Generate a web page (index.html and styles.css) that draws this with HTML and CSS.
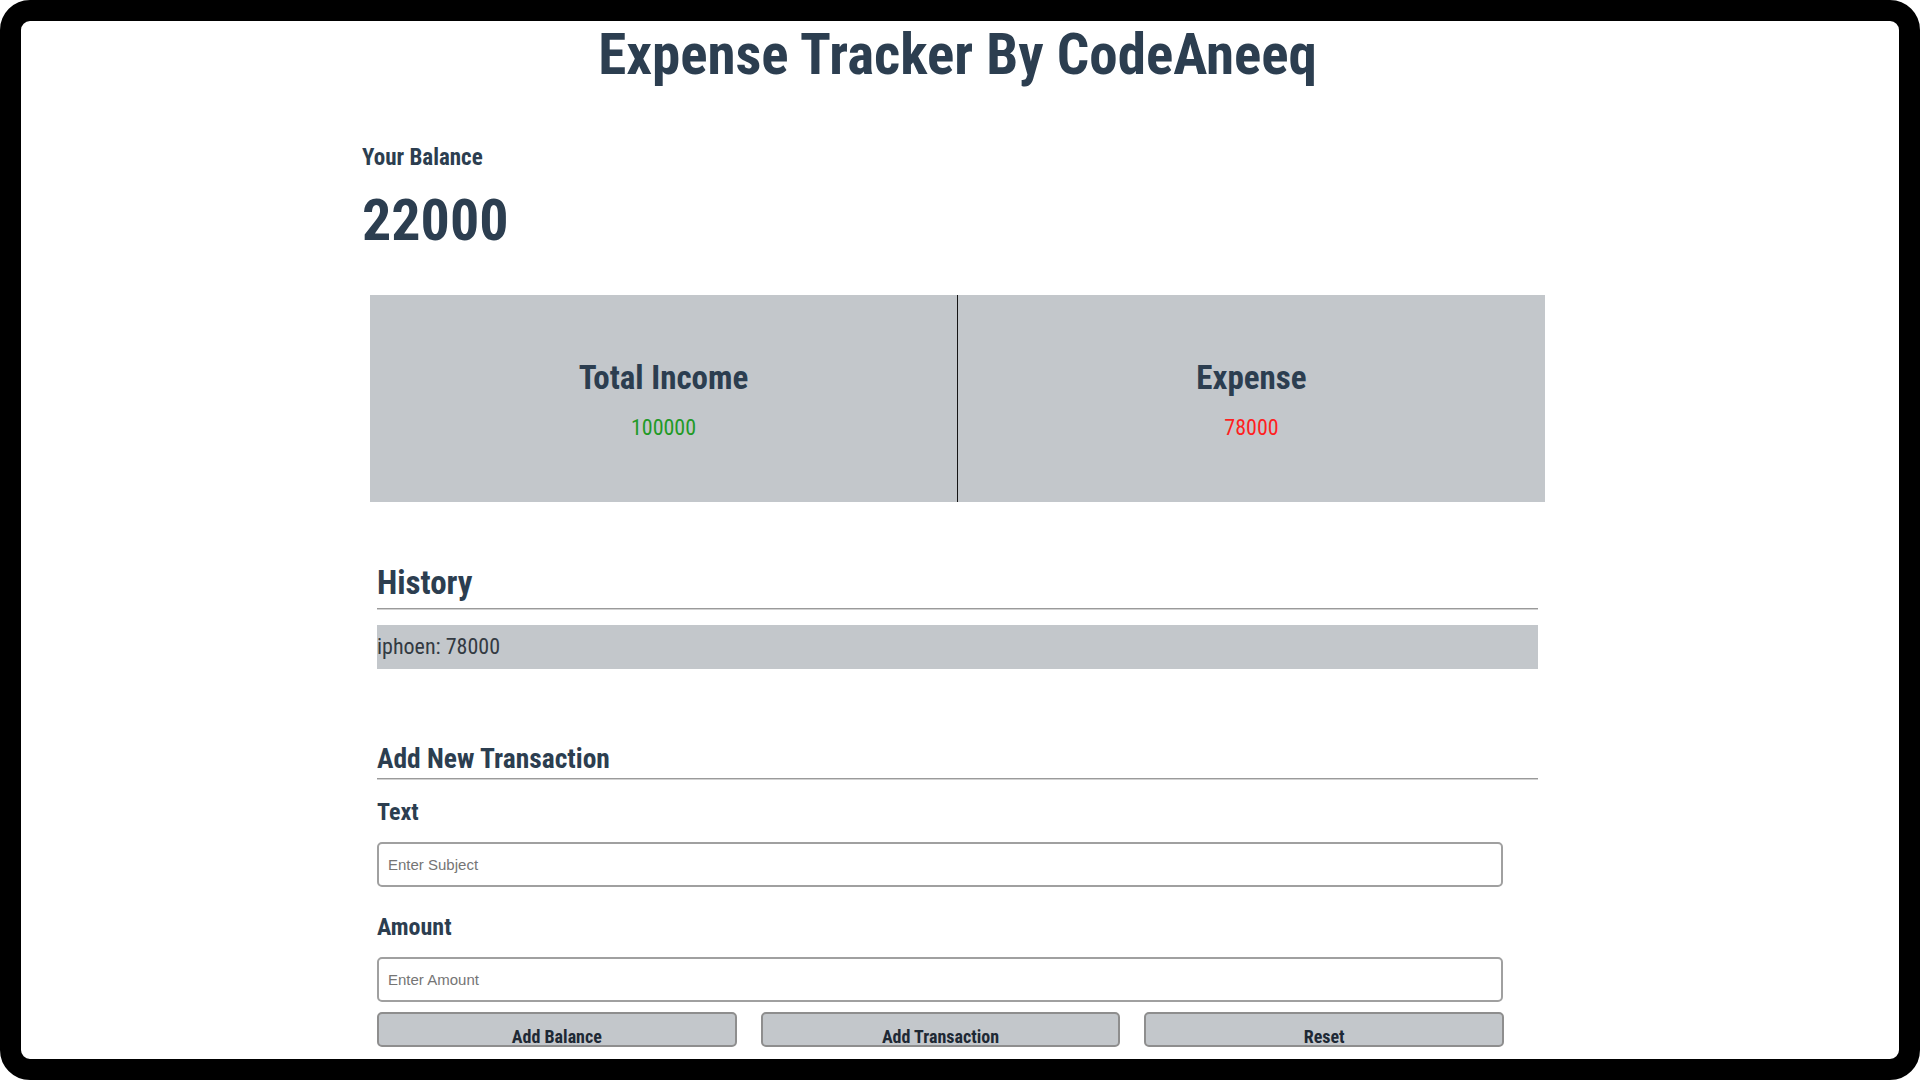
FILE: index.html
```html
<!DOCTYPE html>
<html lang="en">
<head>
<meta charset="utf-8">
<title>Expense Tracker By CodeAneeq</title>
<link rel="stylesheet" href="styles.css">
</head>
<body>
<div class="frame">
  <h1 class="title">Expense Tracker By CodeAneeq</h1>
  <div class="app">
    <h4 class="balance-label">Your Balance</h4>
    <h1 class="balance">22000</h1>

    <div class="stats">
      <div class="stat">
        <h3 class="stat-title">Total Income</h3>
        <p class="money plus">100000</p>
      </div>
      <div class="stat">
        <h3 class="stat-title">Expense</h3>
        <p class="money minus">78000</p>
      </div>
    </div>

    <div class="section">
      <h3 class="section-title">History</h3>
      <hr class="rule">
      <ul class="list">
        <li class="item">iphoen: 78000</li>
      </ul>

      <h3 class="section-title small">Add New Transaction</h3>
      <hr class="rule tight">

      <form class="form">
        <label class="field-label first" for="text">Text</label>
        <input class="field" type="text" id="text" placeholder="Enter Subject">
        <label class="field-label" for="amount">Amount</label>
        <input class="field" type="number" id="amount" placeholder="Enter Amount">
        <div class="buttons">
          <button type="button" class="btn">Add Balance</button>
          <button type="button" class="btn">Add Transaction</button>
          <button type="button" class="btn">Reset</button>
        </div>
      </form>
    </div>
  </div>
</div>
</body>
</html>
```
FILE: styles.css
```css
* {
  box-sizing: border-box;
}

html,
body {
  margin: 0;
  padding: 0;
  background: #ffffff;
}

body {
  font-family: "Roboto Condensed", Roboto, "Liberation Sans", sans-serif;
  color: #2c3e50;
}

.frame {
  width: 1920px;
  height: 1080px;
  border: 21px solid #000000;
  border-radius: 30px;
  overflow: hidden;
  background: #ffffff;
}

.title {
  margin: 0;
  padding-right: 5px;
  text-align: center;
  font-size: 57px;
  line-height: 68px;
  font-weight: 700;
}

.app {
  margin-left: 341px;
  width: 1183px;
}

.balance-label {
  margin: 56px 0 0;
  font-size: 23px;
  line-height: 26px;
  font-weight: 700;
}

.balance {
  margin: 16px 0 0;
  font-size: 58px;
  line-height: 66px;
  font-weight: 700;
}

.stats {
  margin: 42px 0 0 8px;
  width: 1175px;
  height: 207px;
  display: flex;
  background: #c3c7cb;
}

.stat {
  flex: 1 1 0;
  display: flex;
  flex-direction: column;
  align-items: center;
  padding-top: 63px;
}

.stat + .stat {
  border-left: 1px solid #151515;
}

.stat-title {
  margin: 0;
  font-size: 33px;
  line-height: 39px;
  font-weight: 700;
}

.money {
  margin: 18px 0 0;
  font-size: 22px;
  line-height: 26px;
}

.plus {
  color: #1f9a26;
}

.minus {
  color: #ff1f1f;
}

.section {
  margin: 0 7px 0 15px;
}

.section-title {
  margin: 61px 0 0;
  font-size: 33px;
  line-height: 39px;
  font-weight: 700;
}

.section-title.small {
  margin-top: 73px;
  font-size: 27.5px;
  line-height: 33px;
}

.rule {
  margin: 6px 0 0;
  height: 0;
  border: 0;
  border-top: 1px solid #9a9a9a;
  border-bottom: 1px solid #d2d2d2;
}

.rule.tight {
  margin-top: 3px;
}

.list {
  list-style: none;
  margin: 15px 0 0;
  padding: 0;
}

.item {
  height: 44px;
  line-height: 44px;
  font-size: 22px;
  color: #333a42;
  background: #c3c7cb;
}

.form {
  display: flex;
  flex-direction: column;
  width: 1127px;
}

.field-label {
  display: block;
  margin-top: 26px;
  font-size: 24px;
  line-height: 28px;
  font-weight: 700;
}

.field-label.first {
  margin-top: 18px;
}

.field {
  margin-top: 16px;
  width: 1126px;
  height: 45px;
  padding: 0 9px;
  border: 2px solid #a0a0a0;
  border-radius: 5px;
  font-family: "Liberation Sans", Arial, sans-serif;
  font-size: 15px;
  color: #333333;
  background: #ffffff;
  outline: none;
}

.field::placeholder {
  color: #757575;
}

.field::-webkit-outer-spin-button,
.field::-webkit-inner-spin-button {
  -webkit-appearance: none;
  margin: 0;
}

.buttons {
  display: flex;
  gap: 24px;
  margin-top: 10px;
}

.btn {
  flex: 1 1 0;
  height: 35px;
  padding: 13px 0 0;
  border: 2px solid #8e8e8e;
  border-radius: 5px;
  background: #c3c7cb;
  font-family: "Roboto Condensed", Roboto, sans-serif;
  font-size: 18px;
  line-height: 20px;
  font-weight: 700;
  color: #1e2935;
  text-align: center;
}
```
